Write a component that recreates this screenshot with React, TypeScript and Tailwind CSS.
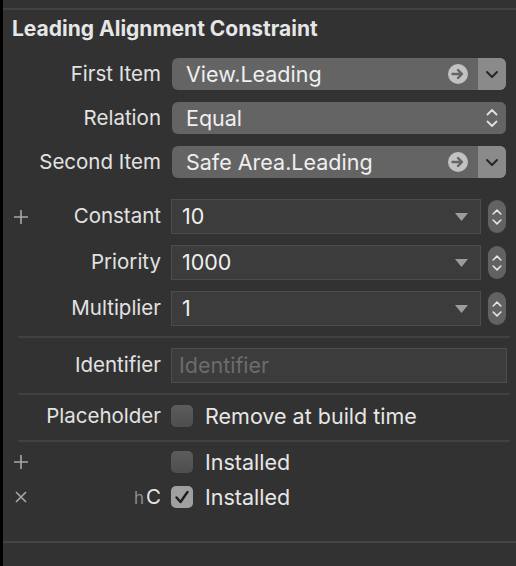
import React from "react";

const font = { fontFamily: "Inter, 'Noto Sans', 'Liberation Sans', sans-serif" };

function ArrowCircle() {
  return (
    <svg width="20" height="20" viewBox="0 0 20 20">
      <circle cx="10" cy="10" r="10" fill="#c2c2c2" />
      <path d="M4.5 10h9M10 6l4 4-4 4" stroke="#646464" strokeWidth="2.4" fill="none" strokeLinecap="round" strokeLinejoin="round" />
    </svg>
  );
}

function ChevronDown({ color = "#262626" }: { color?: string }) {
  return (
    <svg width="14" height="9" viewBox="0 0 14 9">
      <path d="M2 2l5 5 5-5" stroke={color} strokeWidth="2" fill="none" strokeLinecap="round" strokeLinejoin="round" />
    </svg>
  );
}

function UpDown({ color = "#262626", w = 14 }: { color?: string; w?: number }) {
  return (
    <svg width={w} height="24" viewBox="0 0 14 24">
      <path d="M2.5 8.5l4.5-4.5 4.5 4.5" stroke={color} strokeWidth="1.8" fill="none" strokeLinecap="round" strokeLinejoin="round" />
      <path d="M2.5 15.5l4.5 4.5 4.5-4.5" stroke={color} strokeWidth="1.8" fill="none" strokeLinecap="round" strokeLinejoin="round" />
    </svg>
  );
}

function PlusIcon() {
  return (
    <svg width="14" height="14" viewBox="0 0 14 14">
      <path d="M7 0v14M0 7h14" stroke="#a8a8a8" strokeWidth="1.6" />
    </svg>
  );
}

function CrossIcon() {
  return (
    <svg width="12" height="12" viewBox="0 0 12 12">
      <path d="M1 1l10 10M11 1L1 11" stroke="#a8a8a8" strokeWidth="1.6" />
    </svg>
  );
}

function Label({ children }: { children: React.ReactNode }) {
  return <div className="w-[158px] shrink-0 text-right text-[20.5px] text-[#e2e2e2]">{children}</div>;
}

function Popup({ value, kind }: { value: string; kind: "link" | "select" }) {
  return (
    <div className="flex h-[32px] w-[334px] overflow-hidden rounded-[6px] bg-[#646464]">
      <div className="flex flex-1 items-center pl-[14px] pr-[10px] text-[21.5px] text-[#efefef]">
        <span className="flex-1">{value}</span>
        {kind === "link" && <ArrowCircle />}
      </div>
      <div className={`flex w-[28px] items-center justify-center ${kind === "link" ? "bg-[#8a8a8a]" : "bg-[#646464]"}`}>
        {kind === "link" ? <ChevronDown /> : <UpDown color="#e0e0e0" />}
      </div>
    </div>
  );
}

function Gutter({ icon }: { icon?: React.ReactNode }) {
  return <div className="flex w-[36px] shrink-0 justify-center">{icon}</div>;
}

function ComboRow({ label, value, plus }: { label: string; value: string; plus?: boolean }) {
  return (
    <div className="flex h-[35px] items-center">
      <Gutter icon={plus ? <PlusIcon /> : null} />
      <div className="w-[122px] shrink-0 text-right text-[20.5px] text-[#e2e2e2]">{label}</div>
      <div className="ml-[10px] flex h-[35px] w-[310px] items-center border border-[#4c4c4c] bg-[#3c3c3c] pl-[10px] pr-[12px] text-[21.5px] text-[#efefef]">
        <span className="flex-1">{value}</span>
        <svg width="13" height="8" viewBox="0 0 13 8">
          <path d="M0 0h13L6.5 8z" fill="#9c9c9c" />
        </svg>
      </div>
      <div className="ml-[7px] flex h-[33px] w-[18px] items-center justify-center rounded-full bg-[#626262]">
        <UpDown color="#e6e6e6" w={12} />
      </div>
    </div>
  );
}

function Checkbox({ checked }: { checked?: boolean }) {
  return (
    <div
      className={`flex h-[22px] w-[22px] shrink-0 items-center justify-center rounded-[5px] ${
        checked ? "bg-[#a0a0a0]" : "bg-gradient-to-b from-[#5c5c5c] to-[#4e4e4e]"
      }`}
    >
      {checked && (
        <svg width="16" height="14" viewBox="0 0 16 14">
          <path d="M2.5 7.5l4 4.5 7-10" stroke="#1e1e1e" strokeWidth="2.4" fill="none" strokeLinecap="round" strokeLinejoin="round" />
        </svg>
      )}
    </div>
  );
}

function Sep() {
  return <div className="ml-[15px] mr-[6px] h-[2px] bg-[#414141]" />;
}

export default function App() {
  return (
    <div style={font} className="h-[566px] w-[516px] overflow-hidden border-l-[3px] border-black bg-[#323232]">
      <div className="h-[8px]" />
      <div className="h-[2px] bg-[#424242]" />
      <div className="pl-[9px] pt-[7px] text-[21px] font-bold leading-[24px] text-[#e6e6e6]">Leading Alignment Constraint</div>

      <div className="mt-[17px] flex flex-col gap-[12px]">
        <div className="flex items-center">
          <Label>First Item</Label>
          <div className="ml-[11px]"><Popup value="View.Leading" kind="link" /></div>
        </div>
        <div className="flex items-center">
          <Label>Relation</Label>
          <div className="ml-[11px]"><Popup value="Equal" kind="select" /></div>
        </div>
        <div className="flex items-center">
          <Label>Second Item</Label>
          <div className="ml-[11px]"><Popup value="Safe Area.Leading" kind="link" /></div>
        </div>
      </div>

      <div className="mt-[21px] flex flex-col gap-[11px]">
        <ComboRow label="Constant" value="10" plus />
        <ComboRow label="Priority" value="1000" />
        <ComboRow label="Multiplier" value="1" />
      </div>

      <div className="mt-[10px]"><Sep /></div>

      <div className="mt-[10px] flex items-center">
        <Label>Identifier</Label>
        <div className="ml-[10px] flex h-[35px] w-[336px] items-center border border-[#4c4c4c] bg-[#3c3c3c] pl-[7px] text-[21.5px] text-[#6c6c6c]">
          Identifier
        </div>
      </div>

      <div className="mt-[10px]"><Sep /></div>

      <div className="flex h-[45px] items-center pb-[3px]">
        <Label>Placeholder</Label>
        <div className="ml-[10px]"><Checkbox /></div>
        <span className="ml-[12px] text-[21.5px] text-[#e6e6e6]">Remove at build time</span>
      </div>

      <Sep />

      <div className="mt-[8px] flex h-[24px] items-center">
        <Gutter icon={<PlusIcon />} />
        <div className="w-[122px] shrink-0" />
        <div className="ml-[10px]"><Checkbox /></div>
        <span className="ml-[12px] text-[21.5px] text-[#e6e6e6]">Installed</span>
      </div>

      <div className="mt-[11px] flex h-[24px] items-center">
        <Gutter icon={<CrossIcon />} />
        <div className="w-[122px] shrink-0 text-right text-[20.5px] text-[#e6e6e6]">
          <span className="mr-[2px] text-[17px] text-[#8e8e8e]">h</span>C
        </div>
        <div className="ml-[10px]"><Checkbox checked /></div>
        <span className="ml-[12px] text-[21.5px] text-[#e6e6e6]">Installed</span>
      </div>

      <div className="mt-[32px] h-[2px] bg-[#454545]" />
    </div>
  );
}
